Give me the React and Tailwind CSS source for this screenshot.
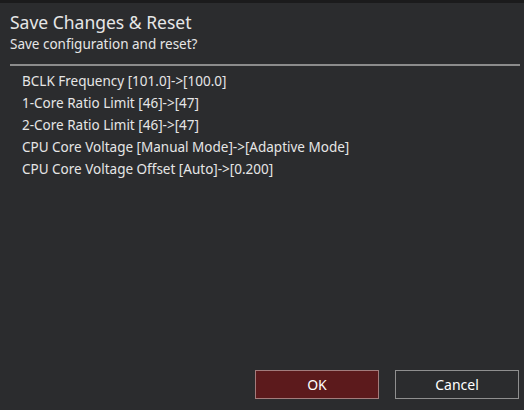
export default function App() {
  const changes = [
    "BCLK Frequency [101.0]->[100.0]",
    "1-Core Ratio Limit [46]->[47]",
    "2-Core Ratio Limit [46]->[47]",
    "CPU Core Voltage [Manual Mode]->[Adaptive Mode]",
    "CPU Core Voltage Offset [Auto]->[0.200]",
  ];

  return (
    <div
      className="w-[524px] h-[410px] bg-[#2b2c2e] text-[#e6e6e6] flex flex-col overflow-hidden"
      style={{ fontFamily: '"Noto Sans", "Open Sans", sans-serif' }}
    >
      <div className="h-[3px] bg-[#1b1b1c]" />
      {/* Header */}
      <div className="px-[10px] pt-[7px]">
        <h1 className="text-[17.5px] leading-[24px]">Save Changes &amp; Reset</h1>
        <p className="text-[13.5px] leading-[20px]">Save configuration and reset?</p>
      </div>
      <div className="ml-[10px] mr-[4px] mt-[10px] h-[2px] bg-[#8c8c8c]" />

      {/* Changes list */}
      <ul className="px-[22px] pt-[4px] flex flex-col text-[13.5px] leading-[22px]">
        {changes.map((c) => (
          <li key={c}>{c}</li>
        ))}
      </ul>

      {/* Buttons */}
      <div className="mt-auto flex justify-end gap-[16px] pr-[5px] pb-[11px]">
        <button className="w-[124px] h-[29px] bg-[#5c1a1c] border border-[#a27c7c] text-[14px] text-white">
          OK
        </button>
        <button className="w-[124px] h-[29px] bg-[#2b2c2e] border border-[#8f8f8f] text-[14px] text-white">
          Cancel
        </button>
      </div>
    </div>
  );
}
